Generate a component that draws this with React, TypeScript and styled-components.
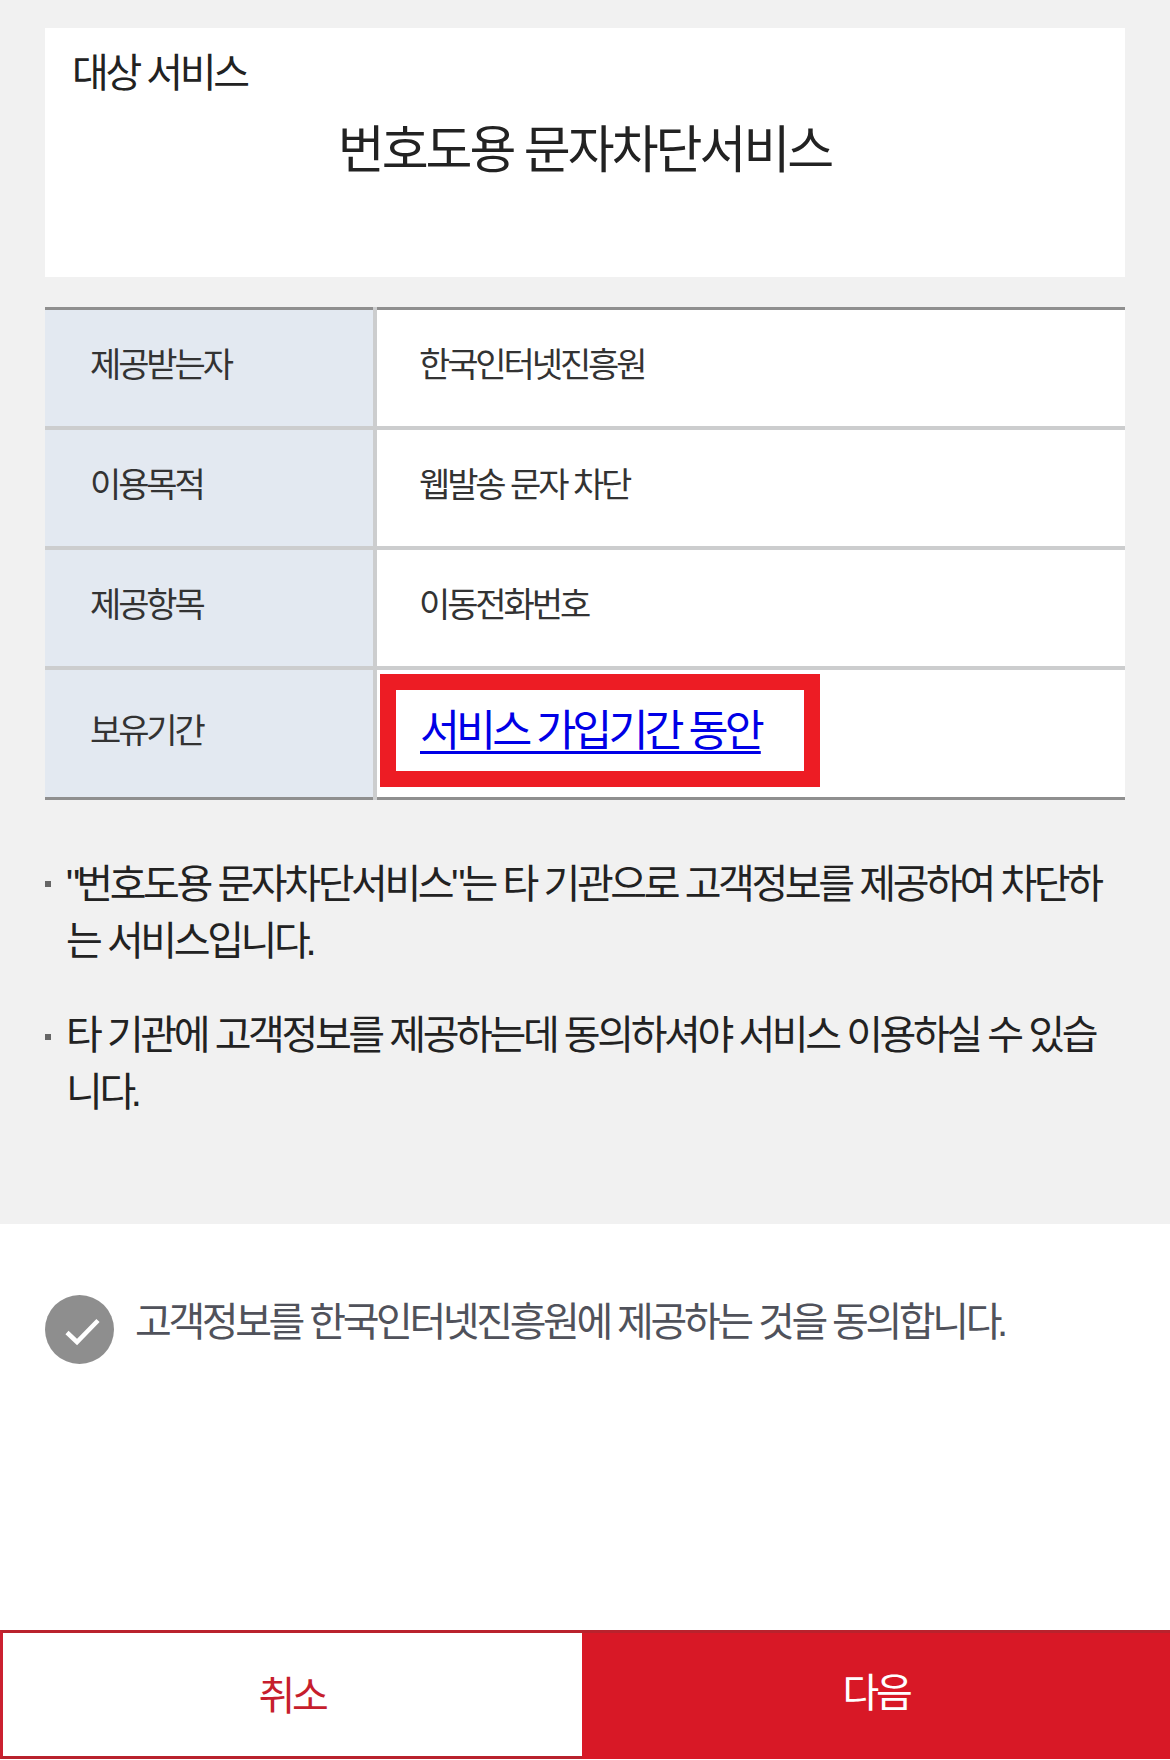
import React from "react";
import styled, { createGlobalStyle } from "styled-components";

const GlobalStyle = createGlobalStyle`
  * { box-sizing: border-box; margin: 0; padding: 0; }
  body {
    background: #fff;
    font-family: "Noto Sans CJK KR", "Noto Sans", sans-serif;
    letter-spacing: -3.4px;
    word-spacing: 2px;
    color: #222;
  }
`;

const Page = styled.main`
  display: flex;
  flex-direction: column;
  width: 1170px;
  height: 1760px;
  overflow: hidden;
  background: #fff;
`;

const Info = styled.section`
  height: 1224px;
  padding: 28px 45px 0;
  background: #f1f1f1;
`;

const ServiceCard = styled.div`
  height: 249px;
  padding: 14px 28px 0 27px;
  background: #fff;
`;

const CardLabel = styled.p`
  font-size: 40px;
  line-height: 57px;
`;

const CardTitle = styled.h1`
  margin-top: 11px;
  font-size: 51px;
  font-weight: 400;
  line-height: 72px;
  letter-spacing: -3px;
  text-align: center;
`;

const Table = styled.div`
  display: flex;
  flex-direction: column;
  margin-top: 30px;
`;

const Row = styled.div<{ $height: number }>`
  display: flex;
  height: ${(p) => p.$height}px;
`;

const lines = {
  first: "inset 0 3px #8f8f8f, inset 0 -4px #cccdce",
  middle: "inset 0 -4px #cccdce",
  last: "inset 0 -3px #8f8f8f",
};

const lift = { first: 12, middle: 14, last: 13 };

const Cell = styled.div<{ $line: keyof typeof lines }>`
  display: flex;
  align-items: center;
  flex: 1;
  padding: 0 0 ${(p) => lift[p.$line]}px 42px;
  font-size: 34px;
  line-height: 48px;
  letter-spacing: -3.1px;
  color: #333;
  background: #fff;
  box-shadow: ${(p) => lines[p.$line]};
`;

const HeadCell = styled(Cell)`
  flex: 0 0 332px;
  padding-left: 45px;
  background: #e3e9f1;
  border-right: 4px solid #cccdce;
`;

const Highlight = styled.div`
  display: flex;
  align-items: center;
  align-self: flex-start;
  width: 440px;
  height: 113px;
  margin: 4px 0 0 -39px;
  padding: 0 0 6px 24px;
  border: 16px solid #ed1c24;
`;

const PeriodLink = styled.a`
  font-size: 43.5px;
  line-height: 60px;
  letter-spacing: -3.9px;
  color: #0000e6;
  text-decoration: underline;
  text-decoration-thickness: 3px;
  text-underline-offset: 5px;
  text-decoration-skip-ink: none;
`;

const Notes = styled.ul`
  display: flex;
  flex-direction: column;
  gap: 37px;
  margin-top: 53px;
  list-style: none;
`;

const Note = styled.li<{ $bulletTop: number }>`
  display: flex;
  gap: 15px;
  font-size: 40px;
  line-height: 57px;
  white-space: nowrap;

  &::before {
    content: "";
    flex: none;
    width: 6px;
    height: 6px;
    margin-top: ${(p) => p.$bulletTop}px;
    background: #666;
  }
`;

const Quote = styled.span`
  font-family: "Liberation Sans", Arial, sans-serif;
  line-height: 0;
  letter-spacing: -3.9px;
`;

const Stop = styled.span`
  margin-left: -2px;
  font-family: "Liberation Sans", Arial, sans-serif;
  line-height: 0;
`;

const Consent = styled.label`
  display: flex;
  align-items: flex-start;
  gap: 21px;
  height: 406px;
  padding: 71px 45px 0;
  font-size: 40px;
  line-height: 49px;
  word-spacing: 1.7px;
  color: #50525b;
  white-space: nowrap;
`;

const CheckIcon = styled.svg`
  flex: none;
  width: 69px;
  height: 69px;
`;

const Actions = styled.div`
  display: flex;
  height: 129px;
`;

const Button = styled.button<{ $primary?: boolean }>`
  width: ${(p) => (p.$primary ? 588 : 582)}px;
  border: 0 solid #b9222d;
  border-width: ${(p) => (p.$primary ? "3px 0 0" : "3px 0 3px 3px")};
  padding-bottom: ${(p) => (p.$primary ? 13 : 4)}px;
  background: ${(p) => (p.$primary ? "#d81826" : "#fff")};
  color: ${(p) => (p.$primary ? "#fff" : "#c61e2d")};
  font: inherit;
  font-size: 40px;
  letter-spacing: inherit;
`;

const CancelButton = styled(Button)`
  border-left-color: #cb2030;
  padding-right: 1px;
`;

const rows = [
  { label: "제공받는자", value: "한국인터넷진흥원", height: 123, line: "first" },
  { label: "이용목적", value: "웹발송 문자 차단", height: 120, line: "middle" },
  { label: "제공항목", value: "이동전화번호", height: 120, line: "middle" },
] as const;

export default function App() {
  return (
    <>
      <GlobalStyle />
      <Page>
        <Info>
          <ServiceCard>
            <CardLabel>대상 서비스</CardLabel>
            <CardTitle>번호도용 문자차단서비스</CardTitle>
          </ServiceCard>
          <Table>
            {rows.map((r) => (
              <Row key={r.label} $height={r.height}>
                <HeadCell $line={r.line}>{r.label}</HeadCell>
                <Cell $line={r.line}>{r.value}</Cell>
              </Row>
            ))}
            <Row $height={130}>
              <HeadCell $line="last">보유기간</HeadCell>
              <Cell $line="last">
                <Highlight>
                  <PeriodLink>서비스 가입기간 동안</PeriodLink>
                </Highlight>
              </Cell>
            </Row>
          </Table>
          <Notes>
            <Note $bulletTop={28}>
              <p>
                <Quote>"</Quote>번호도용 문자차단서비스<Quote>"</Quote>는 타 기관으로 고객정보를 제공하여 차단하
                <br />는 서비스입니다<Stop>.</Stop>
              </p>
            </Note>
            <Note $bulletTop={30}>
              <p>
                타 기관에 고객정보를 제공하는데 동의하셔야 서비스 이용하실 수 있습
                <br />
                니다<Stop>.</Stop>
              </p>
            </Note>
          </Notes>
        </Info>
        <Consent>
          <CheckIcon viewBox="0 0 69 69">
            <circle cx="34.5" cy="34.5" r="34.5" fill="#8e8e8e" />
            <path d="M22 37.5 L32 47 L53 25.5" fill="none" stroke="#fff" strokeWidth="4.5" />
          </CheckIcon>
          <span>
            고객정보를 한국인터넷진흥원에 제공하는 것을 동의합니다<Stop>.</Stop>
          </span>
        </Consent>
        <Actions>
          <CancelButton>취소</CancelButton>
          <Button $primary>다음</Button>
        </Actions>
      </Page>
    </>
  );
}
